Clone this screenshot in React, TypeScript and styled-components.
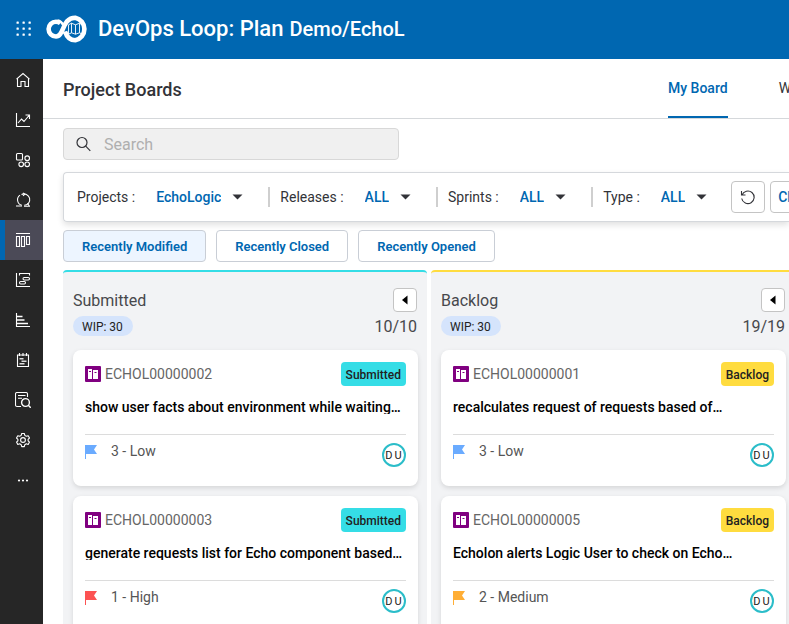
import React from 'react';
import styled, { createGlobalStyle } from 'styled-components';

const GlobalStyle = createGlobalStyle`
  *, *::before, *::after { box-sizing: border-box; }
  html, body, #root { height: 100%; }
  body {
    margin: 0;
    overflow: hidden;
    background: #fff;
    color: #323338;
    font-family: Roboto, "Liberation Sans", sans-serif;
    font-size: 14px;
  }
  h1, h2, h3, p { margin: 0; padding: 0; }
  button, input, select { font-family: inherit; }
`;

const Shell = styled.div`
  display: flex;
  flex-direction: column;
  height: 100%;
`;

const TopBar = styled.header`
  display: flex;
  flex: none;
  align-items: center;
  height: 59px;
  padding: 0 0 2px 16px;
  background: #0067b1;
  color: #fff;
`;

const AppsButton = styled.button`
  display: flex;
  margin-right: 14px;
  padding: 0;
  border: 0;
  background: none;
  color: inherit;
`;

const ProductName = styled.h1`
  margin-left: 8px;
  font-size: 22px;
  font-weight: 500;
  line-height: 26px;
  white-space: nowrap;
`;

const Workspace = styled.span`
  margin-left: 6px;
  font-size: 20px;
  font-weight: 500;
  line-height: 26px;
  white-space: nowrap;
`;

const Body = styled.div`
  display: flex;
  flex: 1;
  min-height: 0;
`;

const SideNav = styled.nav`
  flex: none;
  width: 43px;
  padding-top: 1px;
  background: #262626;
`;

const NavLink = styled.a<{ $active?: boolean }>`
  display: flex;
  align-items: center;
  justify-content: center;
  height: 40px;
  padding-right: 2px;
  border-left: 5px solid ${p => (p.$active ? '#0067b1' : 'transparent')};
  background: ${p => (p.$active ? '#4b4a57' : 'transparent')};
  color: #fff;
`;

const Main = styled.main`
  display: flex;
  flex: 1;
  flex-direction: column;
  min-width: 0;
  overflow: hidden;
`;

const PageHeader = styled.div`
  display: flex;
  flex: none;
  align-items: center;
  justify-content: space-between;
  height: 60px;
  padding-left: 20px;
  border-bottom: 1px solid #d5d8db;
`;

const PageTitle = styled.h2`
  padding-top: 2px;
  font-size: 18px;
  font-weight: 500;
  line-height: 22px;
`;

const Tabs = styled.div`
  display: flex;
  gap: 51px;
  width: 121px;
  height: 100%;
`;

const Tab = styled.a<{ $active?: boolean }>`
  display: flex;
  flex: none;
  align-items: center;
  border-bottom: 2px solid ${p => (p.$active ? '#0067b1' : 'transparent')};
  color: ${p => (p.$active ? '#0067b1' : '#323338')};
  font-weight: ${p => (p.$active ? 500 : 400)};
  text-decoration: none;
  white-space: nowrap;
`;

const Content = styled.div`
  display: flex;
  flex: 1;
  flex-direction: column;
  min-height: 0;
  padding: 9px 0 0 20px;
`;

const SearchBox = styled.label`
  display: flex;
  flex: none;
  align-items: center;
  gap: 13px;
  width: 336px;
  height: 32px;
  padding: 0 12px;
  border: 1px solid #d8d8d8;
  border-radius: 4px;
  background: #f0f0f0;
`;

const SearchInput = styled.input`
  flex: 1;
  min-width: 0;
  padding: 0;
  border: 0;
  outline: 0;
  background: none;
  color: #323338;
  font-size: 16px;
  &::placeholder { color: #afafaf; opacity: 1; }
`;

const FilterBar = styled.div`
  display: flex;
  flex: none;
  align-items: center;
  height: 50px;
  margin-top: 12px;
  padding-left: 13px;
  border: 1px solid #d5d8dc;
  border-right: 0;
  border-radius: 4px 0 0 4px;
  box-shadow: 0 3px 6px rgba(0, 0, 0, 0.12);
`;

const Filter = styled.div`
  display: flex;
  flex: none;
  align-items: center;
  height: 20px;
  padding-right: 25px;
  & + & {
    padding-left: 10px;
    border-left: 2px solid #cfcfcf;
  }
  &:last-of-type { padding-right: 24px; }
`;

const FilterLabel = styled.label`
  margin-right: 21px;
  white-space: nowrap;
`;

const SelectBox = styled.span`
  display: grid;
  align-items: center;
  & > * { grid-area: 1 / 1; }
  & > svg { justify-self: end; pointer-events: none; }
`;

const Select = styled.select`
  field-sizing: content;
  padding: 0 22px 0 0;
  border: 0;
  appearance: none;
  background: none;
  color: #0067b1;
  font-size: 14px;
  font-weight: 500;
`;

const ToolButton = styled.button`
  display: flex;
  flex: none;
  align-items: center;
  justify-content: center;
  min-width: 34px;
  height: 32px;
  margin-right: 5px;
  padding: 0 7px;
  border: 1px solid #c4c4c4;
  border-radius: 4px;
  background: #fff;
  color: #0067b1;
  font-size: 14px;
  font-weight: 500;
  &:first-of-type { color: #323338; }
`;

const Chips = styled.div`
  display: flex;
  flex: none;
  gap: 10px;
  margin-top: 8px;
`;

const Chip = styled.button<{ $active?: boolean }>`
  height: 32px;
  padding: 0 18px;
  border: 1px solid #c9ced6;
  border-radius: 4px;
  background: ${p => (p.$active ? '#edf5ff' : '#fff')};
  color: #0067b1;
  font-size: 13px;
  font-weight: 600;
  white-space: nowrap;
`;

const Board = styled.div`
  display: flex;
  flex: 1;
  gap: 4px;
  min-height: 0;
  margin-top: 8px;
`;

const Column = styled.section<{ $accent: string }>`
  flex: none;
  width: 364px;
  padding: 16px 9px 0 10px;
  border-top: 2px solid ${p => p.$accent};
  border-radius: 4px 4px 0 0;
  background: #f2f3f5;
`;

const ColumnRow = styled.div`
  display: flex;
  align-items: center;
  justify-content: space-between;
  margin-right: 1px;
`;

const ColumnTitle = styled.h3`
  overflow: hidden;
  margin-top: 2px;
  color: #47484c;
  font-size: 16px;
  font-weight: 400;
  line-height: 16px;
`;

const CollapseButton = styled.button`
  display: flex;
  align-items: center;
  justify-content: center;
  width: 24px;
  height: 24px;
  padding: 0;
  border: 1px solid #c4c4c4;
  border-radius: 4px;
  background: #fff;
`;

const WipPill = styled.span`
  height: 20px;
  margin-top: 4px;
  padding: 0 10px 0 9px;
  border-radius: 10px;
  background: #d5e4fc;
  color: #222;
  font-size: 12px;
  line-height: 22px;
`;

const Count = styled.span`
  height: 20px;
  margin-top: 4px;
  color: #47484c;
  font-size: 16px;
  line-height: 22px;
`;

const Cards = styled.div`
  display: flex;
  flex-direction: column;
  gap: 10px;
  margin-top: 14px;
`;

const Card = styled.article`
  height: 136px;
  padding: 12px;
  border-radius: 8px;
  background: #fff;
  box-shadow: 0 2px 5px rgba(0, 0, 0, 0.12);
`;

const CardTop = styled.div`
  display: flex;
  align-items: center;
`;

const CardId = styled.span`
  flex: 1;
  margin-left: 4px;
  color: #666;
`;

const StateBadge = styled.span<{ $color: string }>`
  height: 24px;
  padding: 0 5px;
  border-radius: 4px;
  background: ${p => p.$color};
  color: #222;
  font-size: 12px;
  font-weight: 500;
  line-height: 26px;
`;

const CardTitle = styled.p`
  overflow: hidden;
  margin-top: 14px;
  color: #000;
  font-weight: 500;
  line-height: 14px;
  white-space: nowrap;
`;

const CardBottom = styled.div`
  display: flex;
  align-items: flex-start;
  margin-top: 20px;
  padding-top: 8px;
  border-top: 1px solid #dcdcdc;
`;

const Priority = styled.span`
  flex: 1;
  margin-left: 14px;
  color: #555;
  line-height: 16px;
`;

const Avatar = styled.span`
  display: flex;
  align-items: center;
  justify-content: center;
  width: 24px;
  height: 24px;
  padding-left: 1px;
  border: 2px solid #2bbdc9;
  border-radius: 50%;
  color: #222;
  font-size: 11px;
  letter-spacing: 2px;
`;

const AppsIcon = () => (
  <svg width="16" height="16" viewBox="0 0 16 16" fill="currentColor" aria-hidden="true">
    {[0, 6, 12].map(y => [0, 6, 12].map(x => <rect key={`${x}-${y}`} x={x + 0.5} y={y + 0.5} width="2.3" height="2.3" rx="0.6" />))}
  </svg>
);

const Logo = () => (
  <svg width="44" height="30" viewBox="0 0 44 30" fill="none" stroke="#fff" aria-hidden="true">
    <path d="M14.300 9.200C13 8.200 11.800 7.700 10 7.700A7.400 7.400 0 0 0 10 22.500C18.500 22.500 15.500 3.800 29.300 3.800A11.500 11.500 0 0 1 29.300 26.300C23.500 26.300 20.800 23 19 17.500" strokeWidth="4.600" />
    <path d="M11.500 6.400C14.500 6.900 16.200 8.800 17.200 11" strokeWidth="2.400" />
    <path d="M22.500 10.800l3-1.600 4 1.600 4-1.600 3 1.600v9.400l-3-1.400-4 1.400-4-1.400-3 1.400zM25.500 9.200v9.600M29.500 10.800v9.400M33.500 9.200v9.600" strokeWidth="0.9" />
  </svg>
);

const navIcons: { label: string; art: React.ReactNode }[] = [
  { label: 'Home', art: <path d="M1.500 7.200 8 1.600l6.500 5.600M2.500 6.500v8h3.500V9.500h4v5h3.500v-8" /> },
  { label: 'Trends', art: <path d="M1.500 1v13.500H15M3 11l3.500-4 2.500 2.500 5-6M10.500 3h4v4" /> },
  { label: 'Components', art: <><rect x="1.500" y="1.500" width="6" height="6.500" rx="1" /><circle cx="12.200" cy="6.200" r="2.300" /><circle cx="6.200" cy="12.300" r="2.300" /><circle cx="12.200" cy="12.300" r="2.300" /></> },
  { label: 'Sprints', art: <><path d="M6.800 13.300A5.700 5.700 0 0 1 5 3.100M6.500 2.500A5.700 5.700 0 1 1 9.200 13.300" /><path d="M1 14h6M9 14.300h6M12.500 11.500l2 2.800M8 .800 9.700 2.300 8 3.800" /></> },
  { label: 'Boards', art: <path d="M1 1.500h14M1.500 4.500h3v10h-3zM6.500 4.500h3v10h-3zM11.500 4.500h3v8h-3z" /> },
  { label: 'Timeline', art: <><path d="M1.500 1v13.500H15M4.500 3.500v-2h10v2" /><rect x="8" y="5.500" width="6.500" height="2.500" rx="1.200" /><rect x="4.500" y="9.500" width="6" height="2.500" rx="1.200" /></> },
  { label: 'Reports', art: <><path d="M1.500 1v13.500H15" /><path d="M2 4.500h5.500M2 8h7.500M2 11.500h11" strokeWidth="1.500" /></> },
  { label: 'Plans', art: <><path d="M2.500 3h11v11.500h-11zM4.500 1v3M8 1v3M11.500 1v3" /><path d="M4.500 6.800h4M6.500 9.200h5M4.500 11.700h5" strokeWidth="1.400" opacity="0.85" /></> },
  { label: 'Queries', art: <><path d="M6 14.500H2a1.500 1.500 0 0 1-1.500-1.500V2A1.500 1.500 0 0 1 2 .500h9a1.500 1.500 0 0 1 1.500 1.500V5M3 3.500h7.500M3 6.300h4" /><circle cx="10.500" cy="10.500" r="3.900" strokeWidth="1.400" /><path d="m13.300 13.300 2.500 2.500" strokeWidth="1.400" /></> },
  { label: 'Settings', art: <><path d="M6.700 1.500h2.600l.5 1.900 1.500.9 1.900-.6 1.300 2.300-1.400 1.300v1.500l1.400 1.300-1.300 2.300-1.900-.6-1.500.9-.5 1.900H6.700l-.5-1.900-1.500-.9-1.900.6-1.300-2.300 1.400-1.300V7.300L1.500 6l1.300-2.300 1.900.6 1.500-.9z" strokeLinejoin="round" /><circle cx="8" cy="8" r="2.400" /></> },
  { label: 'More', art: <g fill="currentColor" stroke="none"><circle cx="4" cy="8.500" r="1.100" /><circle cx="8" cy="8.500" r="1.100" /><circle cx="12" cy="8.500" r="1.100" /></g> },
];

const Caret = () => (
  <svg width="11" height="6" viewBox="0 0 11 6" aria-hidden="true"><path d="M0.500 0.500h10L5.500 5.500z" fill="#323338" /></svg>
);

const RecordIcon = () => (
  <svg width="16" height="16" viewBox="0 0 16 16" aria-hidden="true">
    <rect width="16" height="16" rx="1" fill="#800080" />
    <path d="M3 3h4v10H3zM8 4h5v9H8z" fill="#fff" />
    <path d="M4 5.500h2M9.500 6.500h2" stroke="#800080" />
  </svg>
);

const Flag = ({ color }: { color: string }) => (
  <svg width="12" height="16" viewBox="0 0 12 16" aria-hidden="true">
    <path d="M0 2h12l-3 4.500 3 4.500H1v5H0z" fill={color} />
  </svg>
);

const filters = [
  { label: 'Projects', value: 'EchoLogic' },
  { label: 'Releases', value: 'ALL' },
  { label: 'Sprints', value: 'ALL' },
  { label: 'Type', value: 'ALL' },
];

const columns = [
  {
    name: 'Submitted', accent: '#35dde6', count: '10/10',
    cards: [
      { id: 'ECHOL00000002', title: 'show user facts about environment while waiting…', priority: '3 - Low', flag: '#6aabff' },
      { id: 'ECHOL00000003', title: 'generate requests list for Echo component based…', priority: '1 - High', flag: '#fc5252' },
    ],
  },
  {
    name: 'Backlog', accent: '#ffdc3f', count: '19/19',
    cards: [
      { id: 'ECHOL00000001', title: 'recalculates request of requests based of…', priority: '3 - Low', flag: '#6aabff' },
      { id: 'ECHOL00000005', title: 'Echolon alerts Logic User to check on Echo…', priority: '2 - Medium', flag: '#ffae35' },
    ],
  },
];

export default function App() {
  return (
    <Shell>
      <GlobalStyle />
      <TopBar>
        <AppsButton aria-label="Applications"><AppsIcon /></AppsButton>
        <Logo />
        <ProductName>DevOps Loop: Plan</ProductName>
        <Workspace>Demo/EchoL</Workspace>
      </TopBar>
      <Body>
        <SideNav>
          {navIcons.map(item => (
            <NavLink key={item.label} href="#" aria-label={item.label} $active={item.label === 'Boards'}>
              <svg width="16" height="16" viewBox="0 0 16 16" fill="none" stroke="currentColor" strokeWidth="1.1" aria-hidden="true">{item.art}</svg>
            </NavLink>
          ))}
        </SideNav>
        <Main>
          <PageHeader>
            <PageTitle>Project Boards</PageTitle>
            <Tabs>
              <Tab href="#" $active>My Board</Tab>
              <Tab href="#">Work Items</Tab>
            </Tabs>
          </PageHeader>
          <Content>
            <SearchBox>
              <svg width="15" height="16" viewBox="0 0 15 16" fill="none" stroke="#323338" strokeWidth="1.2" aria-hidden="true">
                <circle cx="6" cy="6.500" r="5" /><path d="m9.700 10.200 4.600 4.600" />
              </svg>
              <SearchInput type="search" placeholder="Search" aria-label="Search" />
            </SearchBox>
            <FilterBar>
              {filters.map(f => (
                <Filter key={f.label}>
                  <FilterLabel htmlFor={f.label}>{f.label} :</FilterLabel>
                  <SelectBox>
                    <Select id={f.label} defaultValue={f.value}><option>{f.value}</option></Select>
                    <Caret />
                  </SelectBox>
                </Filter>
              ))}
              <ToolButton aria-label="Reset filters">
                <svg width="16" height="16" viewBox="0 0 16 16" fill="none" stroke="currentColor" strokeWidth="1.1" aria-hidden="true">
                  <path d="M1.500 2v4h4M2 6a6.300 6.300 0 1 1-.3 3.500" />
                </svg>
              </ToolButton>
              <ToolButton>Clear</ToolButton>
            </FilterBar>
            <Chips>
              <Chip $active aria-pressed="true">Recently Modified</Chip>
              <Chip>Recently Closed</Chip>
              <Chip>Recently Opened</Chip>
            </Chips>
            <Board>
              {columns.map(col => (
                <Column key={col.name} $accent={col.accent}>
                  <ColumnRow>
                    <ColumnTitle>{col.name}</ColumnTitle>
                    <CollapseButton aria-label={`Collapse ${col.name}`}>
                      <svg width="8" height="10" viewBox="0 0 8 10" aria-hidden="true"><path d="M6.500 0.500v9L1 5z" /></svg>
                    </CollapseButton>
                  </ColumnRow>
                  <ColumnRow>
                    <WipPill>WIP: 30</WipPill>
                    <Count>{col.count}</Count>
                  </ColumnRow>
                  <Cards>
                    {col.cards.map(card => (
                      <Card key={card.id}>
                        <CardTop>
                          <RecordIcon />
                          <CardId>{card.id}</CardId>
                          <StateBadge $color={col.accent}>{col.name}</StateBadge>
                        </CardTop>
                        <CardTitle>{card.title}</CardTitle>
                        <CardBottom>
                          <Flag color={card.flag} />
                          <Priority>{card.priority}</Priority>
                          <Avatar>DU</Avatar>
                        </CardBottom>
                      </Card>
                    ))}
                  </Cards>
                </Column>
              ))}
            </Board>
          </Content>
        </Main>
      </Body>
    </Shell>
  );
}
